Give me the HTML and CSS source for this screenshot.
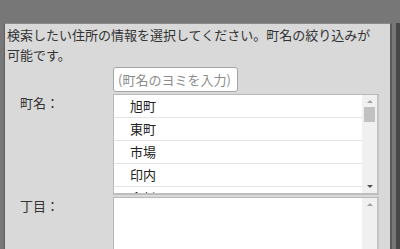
FILE: index.html
```html
<!DOCTYPE html>
<html lang="ja">
<head>
    <meta charset="UTF-8">
    <title>住所検索</title>
    <link rel="stylesheet" href="styles.css">
</head>
<body>
    <div class="frame">
        <div class="dialog">
            <p class="intro">検索したい住所の情報を選択してください。町名の絞り込みが可能です。</p>

            <div class="form-row">
                <div class="label"></div>
                <input type="text" class="search" placeholder="(町名のヨミを入力)">
            </div>

            <div class="form-row">
                <div class="label">町名：</div>
                <div class="listbox town-list">
                    <div class="items">
                        <div class="item">旭町</div>
                        <div class="item">東町</div>
                        <div class="item">市場</div>
                        <div class="item">印内</div>
                        <div class="item">金杉</div>
                    </div>
                    <div class="scrollbar">
                        <span class="arrow up"></span>
                        <span class="thumb"></span>
                        <span class="track"></span>
                        <span class="arrow down"></span>
                    </div>
                </div>
            </div>

            <div class="form-row">
                <div class="label">丁目：</div>
                <div class="listbox chome-list">
                    <div class="items"></div>
                    <div class="scrollbar">
                        <span class="arrow up"></span>
                    </div>
                </div>
            </div>
        </div>
    </div>
</body>
</html>
```

FILE: styles.css
```css
body {
    margin: 0;
    padding: 23px 0 0 4px;
    background-color: #777777;
    font-family: "Noto Sans CJK JP", "Noto Sans", sans-serif;
    font-size: 13px;
    color: #333333;
    height: 249px;
    box-sizing: border-box;
    overflow: hidden;
}

.frame {
    height: 100%;
    border-right: 4px solid #474747;
}

.dialog {
    width: 388px;
    height: 100%;
    background-color: #d9d9d9;
    border-left: 1px solid #5e5e5e;
    border-right: 2px solid #5a5a5a;
    border-top: 1px solid #8a8a8a;
    box-sizing: border-box;
}

.intro {
    margin: 0;
    padding: 1px 10px 0 2px;
    line-height: 20px;
}

.form-row {
    display: flex;
    align-items: flex-start;
}

.label {
    width: 108px;
    flex-shrink: 0;
    padding-left: 15px;
    box-sizing: border-box;
    line-height: 22px;
}

.search {
    margin-top: 2px;
    width: 125px;
    height: 25px;
    box-sizing: border-box;
    border: 1px solid #a5a5a5;
    border-radius: 3px;
    padding: 0 4px;
    font-family: inherit;
    font-size: 13px;
    color: #333333;
    background-color: #ffffff;
}

.search::placeholder {
    color: #8c8c8c;
}

.listbox {
    width: 266px;
    display: flex;
    background-color: #ffffff;
    border: 1px solid #b9b9b9;
    border-right: 2px solid #c4c4c4;
    box-sizing: border-box;
    overflow: hidden;
}

.town-list {
    margin-top: 2px;
    height: 101px;
    border-bottom: 2px solid #bdbdbd;
}

.chome-list {
    margin-top: 2px;
    height: 60px;
    border-bottom: none;
}

.items {
    flex-grow: 1;
}

.item {
    height: 22px;
    line-height: 22px;
    padding-left: 16px;
    border-bottom: 1px solid #e4e4e4;
    color: #222222;
}

.scrollbar {
    width: 15px;
    background-color: #f0f0f0;
    display: flex;
    flex-direction: column;
    align-items: center;
}

.arrow {
    width: 0;
    height: 0;
    border-left: 3px solid transparent;
    border-right: 3px solid transparent;
    margin: 5px 0 0;
}

.arrow.up {
    border-bottom: 3px solid #a3a3a3;
}

.arrow.down {
    border-top: 3px solid #505050;
    margin: 0 0 5px;
}

.thumb {
    width: 11px;
    height: 15px;
    margin-top: 4px;
    background-color: #c1c1c1;
}

.track {
    flex-grow: 1;
}
```
